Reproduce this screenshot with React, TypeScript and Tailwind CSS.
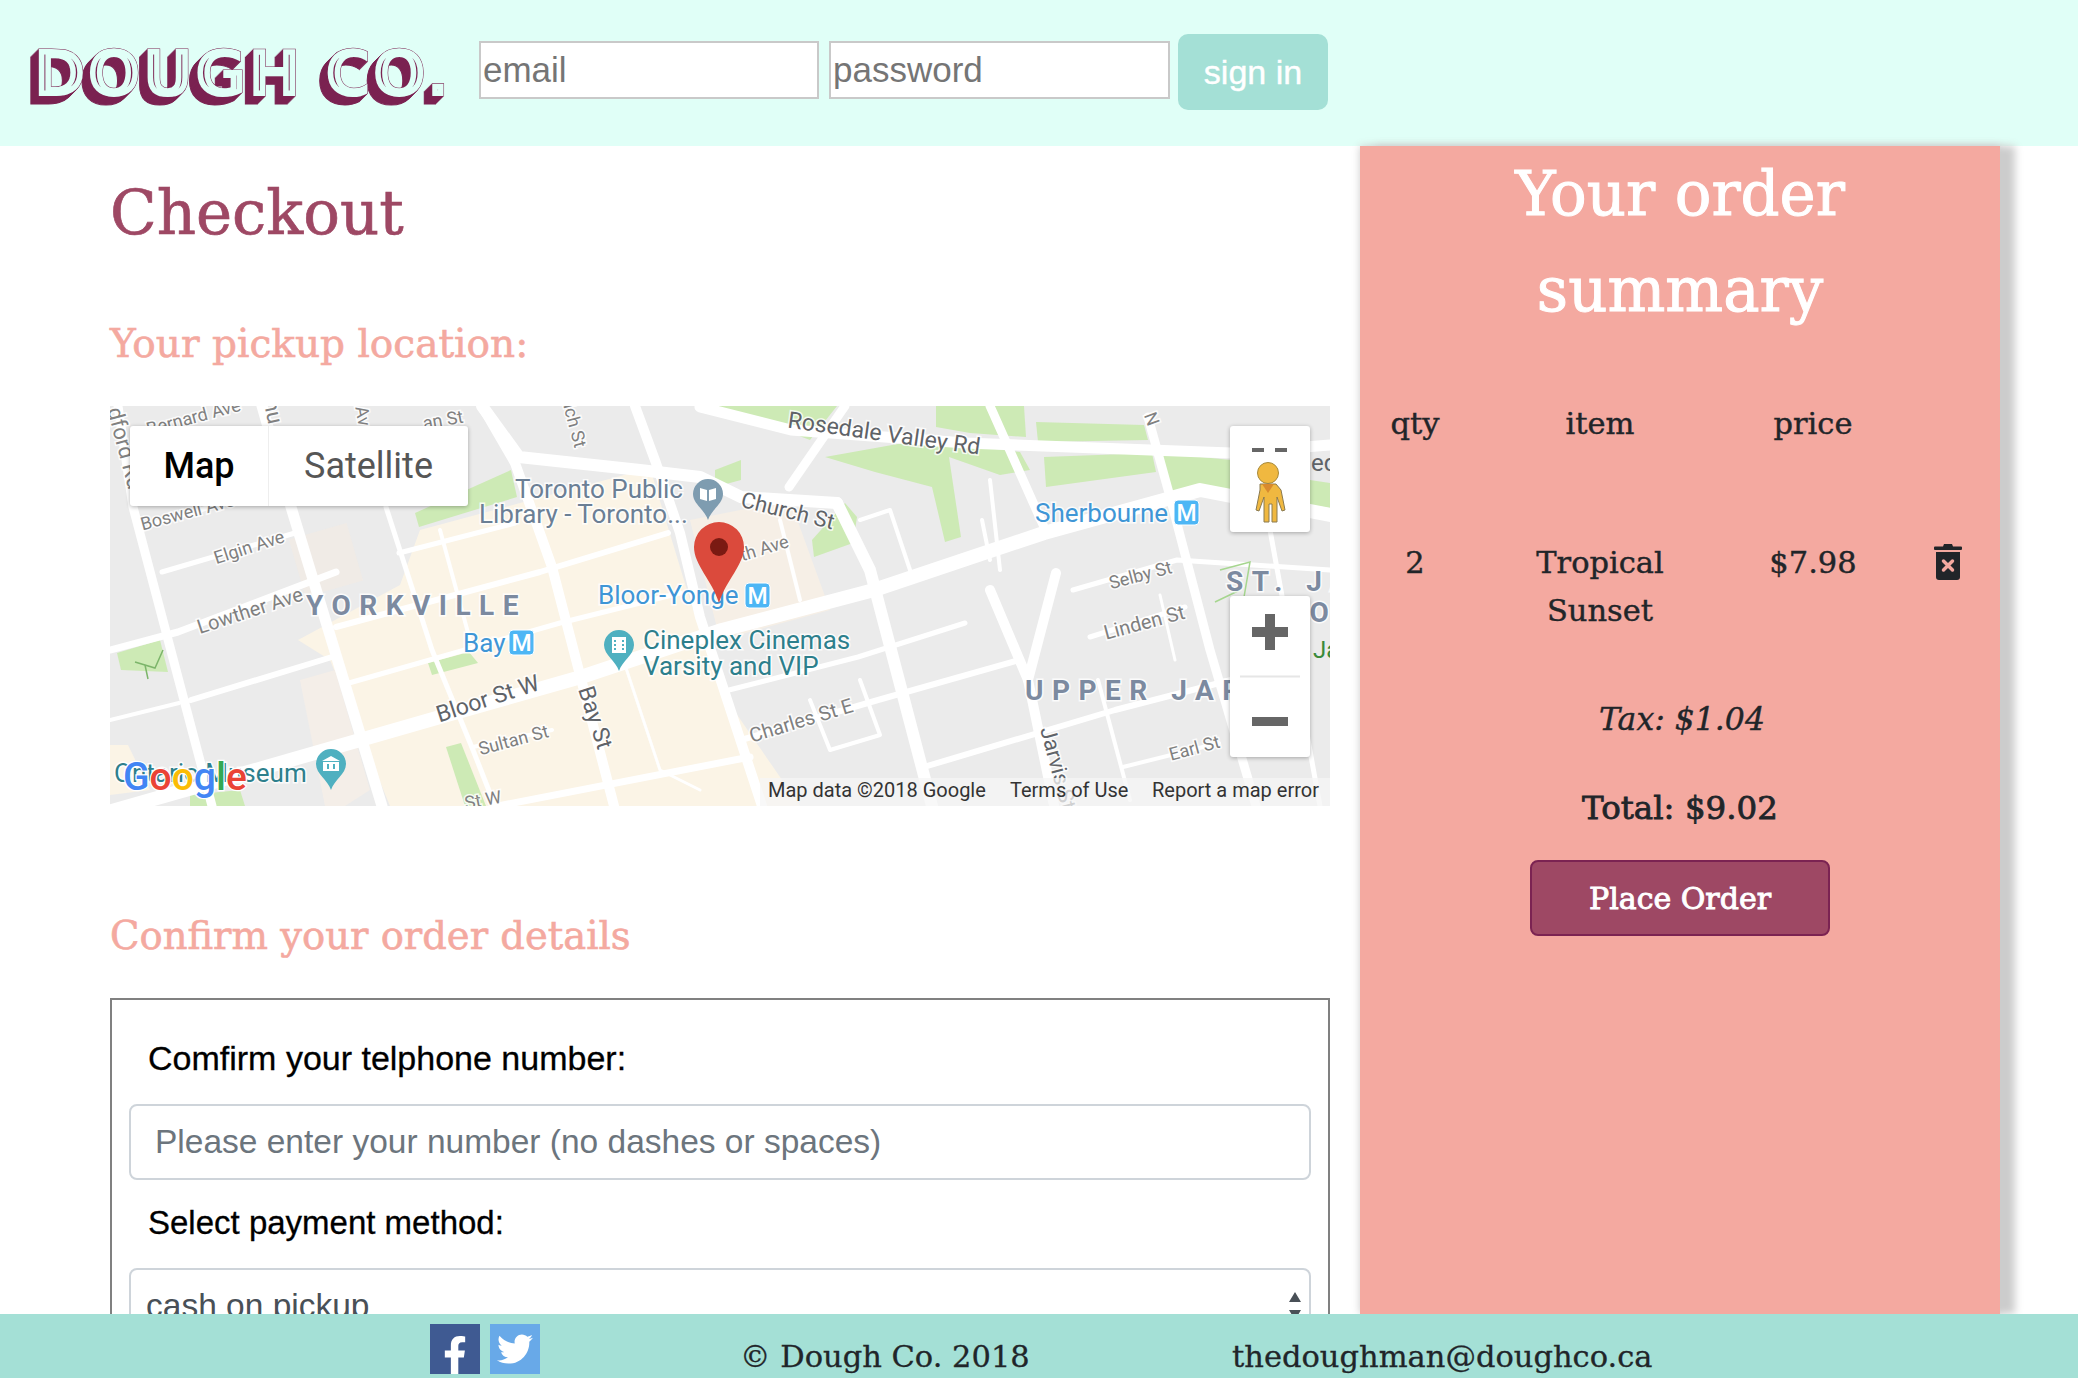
import React from "react";
import { FaFacebookF, FaTwitter } from "react-icons/fa";

const roads: [string, number][] = [
  ["118,406 133,507 212,806", 9],
  ["262,406 291,507 382,806", 11],
  ["386,507 432,650 473,750 495,806", 5],
  ["482,406 515,463 552,567 614,806", 10],
  ["635,406 656,463 680,533 700,617 762,806", 10],
  ["845,406 789,487", 9],
  ["837,503 870,570 932,806", 12],
  ["990,406 1044,527", 9],
  ["1056,573 1028,680 1056,815", 10],
  ["990,590 1028,680", 10],
  ["1148,417 1169,493 1210,650 1256,806", 9],
  ["1270,530 1290,640 1320,806", 5],
  ["108,812 266,767 440,717 581,677 722,630 874,590 1044,533 1200,490 1330,515", 14],
  ["700,407 791,430 965,443 1231,453 1330,445", 11],
  ["482,406 519,457 640,470 700,477 741,497 837,503", 12],
  ["110,650 178,632 336,572", 7],
  ["336,627 540,572 668,533", 6],
  ["162,572 295,533", 5],
  ["399,553 515,523", 5],
  ["150,525 300,480", 5],
  ["191,700 332,657", 6],
  ["349,683 560,623 680,593", 5],
  ["110,720 179,703", 4],
  ["473,747 552,730", 4],
  ["498,806 750,757", 7],
  ["741,740 878,700 1019,660", 6],
  ["729,690 858,657 965,623", 5],
  ["924,767 1115,710 1231,680", 6],
  ["1123,767 1219,743", 4],
  ["1073,590 1177,560 1330,570", 5],
  ["1090,637 1185,607", 5],
  ["990,480 1000,570", 4],
  ["982,520 990,560", 4],
  ["780,520 800,600", 4],
  ["860,520 890,510 910,570", 4],
  ["810,700 830,750 880,735 860,680", 4],
  ["440,530 470,640", 4],
  ["1160,595 1175,660", 3],
  ["1098,680 1130,800", 4],
  ["620,650 660,770 700,790", 3],
];

const parks: string[] = [
  "936,406 1024,406 1026,437 970,433 936,427",
  "708,406 837,406 810,440 770,425 720,416",
  "825,457 920,440 1020,452 1030,470 1000,475 949,457 961,537 945,542 932,487 875,472",
  "1044,457 1152,453 1156,472 1046,487",
  "1036,422 1144,425 1148,440 1038,442",
  "1160,453 1231,460 1231,490 1169,493",
  "1310,480 1330,483 1330,508 1310,505",
  "715,470 741,460 741,480 715,487",
  "812,540 845,503 857,517 853,543 814,557",
  "415,513 511,470 517,497 419,527",
  "117,653 160,640 168,672 121,670",
  "428,663 469,652 478,663 432,675",
  "446,747 461,743 486,806 465,806",
  "190,795 240,790 245,806 190,806",
];

const streetLabels: [string, number, number, number, number][] = [
  ["Bernard Ave", 195, 423, -15, 18],
  ["Boswell Ave", 189, 518, -15, 18],
  ["Elgin Ave", 251, 553, -18, 18],
  ["Lowther Ave", 252, 617, -18, 20],
  ["Sultan St", 515, 746, -15, 18],
  ["Charles St E", 803, 727, -17, 20],
  ["Selby St", 1142, 581, -15, 18],
  ["Linden St", 1146, 629, -15, 20],
  ["Earl St", 1196, 754, -15, 18],
  ["th Ave", 766, 554, -17, 18],
  ["an St", 444, 426, -10, 18],
  ["ich St", 569, 427, 75, 18],
  ["Av", 357, 417, 80, 18],
  ["nu", 266, 413, 78, 22],
  ["dford Rd", 118, 450, 75, 22],
  ["St W", 484, 806, -10, 18],
  ["N", 1146, 421, 70, 18],
];

const darkLabels: [string, number, number, number, number][] = [
  ["Rosedale Valley Rd", 883, 441, 8, 23],
  ["Church St", 786, 518, 14, 22],
  ["Bloor St W", 490, 706, -18, 23],
  ["Bay St", 588, 720, 72, 23],
  ["Jarvis St", 1051, 770, 75, 22],
];

const haloText = "[paint-order:stroke] stroke-white/80 stroke-[3px]";

function MetroBadge({ x, y }: { x: number; y: number }) {
  return (
    <g>
      <rect x={x} y={y} width="25" height="25" rx="4" fill="#4db6f5" stroke="#fff" strokeWidth="1" />
      <text x={x + 12.5} y={y + 21} textAnchor="middle" fontSize="23" fontWeight="500" fill="#fff">
        M
      </text>
    </g>
  );
}

function PoiPin({ x, y, color, children }: { x: number; y: number; color: string; children: React.ReactNode }) {
  return (
    <g transform={`translate(${x} ${y})`}>
      <path d="M0 40C-3 30 -15 24 -15 14a15 15 0 0 1 30 0C15 24 3 30 0 40Z" fill={color} />
      {children}
    </g>
  );
}

function MapCanvas() {
  return (
    <svg viewBox="110 406 1220 400" className="block w-full h-full font-['Roboto',sans-serif]">
      <rect x="110" y="406" width="1220" height="400" fill="#ebebeb" />
      <polygon
        points="298,640 400,585 420,530 650,468 690,600 720,690 800,806 390,806 330,660"
        fill="#fbf4e6"
      />
      <polygon points="110,745 128,745 150,790 110,795" fill="#fbf4e6" />
      <polygon points="690,520 790,500 830,610 720,640" fill="#f6efe6" />
      <polygon points="300,680 335,670 370,790 345,806 325,806" fill="#f4eee8" />
      <rect x="296" y="530" width="60" height="60" fill="#f4ebe2" opacity="0.6" transform="rotate(-16 326 560)" />
      {parks.map((p, i) => (
        <polygon key={i} points={p} fill="#cdeab5" />
      ))}
      {roads.map(([p, w], i) => (
        <polyline key={i} points={p} fill="none" stroke="#fff" strokeWidth={w} strokeLinejoin="round" strokeLinecap="round" />
      ))}
      <path d="M1220 570l30 -8 -6 35 12 22 -20 20 M1240 590l-25 12" fill="none" stroke="#a6d68f" strokeWidth="1.5" />
      <path d="M135 662l20 6 8 -18 M145 665l3 14" fill="none" stroke="#7cb56a" strokeWidth="1.5" />

      {streetLabels.map(([t, x, y, r, s]) => (
        <text key={t} x={x} y={y} textAnchor="middle" fontSize={s} fill="#808080" transform={`rotate(${r} ${x} ${y})`} className={haloText}>
          {t}
        </text>
      ))}
      {darkLabels.map(([t, x, y, r, s]) => (
        <text key={t} x={x} y={y} textAnchor="middle" fontSize={s} fill="#5f6368" transform={`rotate(${r} ${x} ${y})`} className={haloText}>
          {t}
        </text>
      ))}

      <text x="515" y="498" fontSize="26" fill="#6b7f95" className={haloText}>Toronto Public</text>
      <text x="479" y="523" fontSize="26" fill="#6b7f95" className={haloText}>Library - Toronto...</text>
      <text x="1035" y="522" fontSize="26" fill="#3f96d6" className={haloText}>Sherbourne</text>
      <text x="598" y="604" fontSize="26" fill="#3f96d6" className={haloText}>Bloor-Yonge</text>
      <text x="463" y="652" fontSize="26" fill="#3f96d6" className={haloText}>Bay</text>
      <text x="643" y="649" fontSize="26" fill="#2d7f8c" className={haloText}>Cineplex Cinemas</text>
      <text x="643" y="675" fontSize="26" fill="#2d7f8c" className={haloText}>Varsity and VIP</text>
      <text x="114" y="782" fontSize="26" fill="#2d7f8c" className={haloText}>Ontario Museum</text>
      <text x="306" y="615" fontSize="28" fontWeight="700" letterSpacing="8.5" fill="#7c8aa0" className={haloText}>YORKVILLE</text>
      <text x="1025" y="700" fontSize="28" fontWeight="700" letterSpacing="8.5" fill="#7c8aa0" className={haloText}>UPPER JARVIS</text>
      <text x="1226" y="591" fontSize="28" fontWeight="700" letterSpacing="8.5" fill="#7c8aa0" className={haloText}>ST. JAMES</text>
      <text x="1284" y="622" fontSize="28" fontWeight="700" letterSpacing="8.5" fill="#7c8aa0" className={haloText}>TOWN</text>
      <text x="1313" y="658" fontSize="24" fill="#3a8a3a">Ja</text>
      <text x="1311" y="471" fontSize="24" fill="#5f6368">ed</text>

      <MetroBadge x={1174} y={500} />
      <MetroBadge x={745} y={583} />
      <MetroBadge x={509} y={630} />

      <PoiPin x={708} y={480} color="#7e9cb0">
        <path d="M-8 8l7 2v11l-7 -2zM8 8l-7 2v11l7 -2z" fill="#fff" />
      </PoiPin>
      <PoiPin x={619} y={631} color="#4fb0c0">
        <path d="M-7 6h14v16h-14z" fill="#fff" />
        <path d="M-5 9h2v2h-2zM-5 13h2v2h-2zM-5 17h2v2h-2zM3 9h2v2h-2zM3 13h2v2h-2zM3 17h2v2h-2z" fill="#4fb0c0" />
      </PoiPin>
      <PoiPin x={331} y={750} color="#4fb0c0">
        <path d="M-9 11l9 -5 9 5zM-8 12h16v9h-16z" fill="#fff" />
        <path d="M-4 14h2v5h-2zM2 14h2v5h-2z" fill="#4fb0c0" />
      </PoiPin>

      <path d="M719 603C712 580 694 565 694 547a25 25 0 0 1 50 0C744 565 726 580 719 603Z" fill="#db4a3c" />
      <circle cx="719" cy="547" r="9" fill="#7a1a12" />

      <rect x="760" y="778" width="570" height="28" fill="#f5f5f5" fillOpacity="0.75" />
      <g fontSize="20" fill="#333">
        <text x="768" y="797">Map data ©2018 Google</text>
        <text x="1010" y="797">Terms of Use</text>
        <text x="1152" y="797">Report a map error</text>
      </g>
      <text x="123" y="790" fontSize="39" fontWeight="500" stroke="#fff" strokeWidth="2.5" className="[paint-order:stroke]">
        <tspan fill="#4285f4">G</tspan>
        <tspan fill="#ea4335">o</tspan>
        <tspan fill="#fbbc05">o</tspan>
        <tspan fill="#4285f4">g</tspan>
        <tspan fill="#34a853">l</tspan>
        <tspan fill="#ea4335">e</tspan>
      </text>
    </svg>
  );
}

function Logo() {
  const depth = [8, 7, 6, 5, 4, 3, 2, 1];
  return (
    <svg viewBox="0 0 479 146" className="w-[479px] h-[146px] shrink-0">
      <defs>
        <text id="logo-text" x="33" y="96" fontSize="64" fontWeight="700" letterSpacing="0.6" fontFamily="DejaVu Sans">
          DOUGH CO.
        </text>
        <clipPath id="logo-clip">
          <use href="#logo-text" />
        </clipPath>
      </defs>
      {depth.map((d) => (
        <use key={d} href="#logo-text" x={-d} y={d} fill="#7b2352" stroke="#7b2352" strokeWidth="1" />
      ))}
      <use href="#logo-text" fill="#e0fff7" stroke="#7b2352" strokeWidth="1" />
      <g clipPath="url(#logo-clip)">
        <use href="#logo-text" fill="none" stroke="#7b2352" strokeWidth="13" />
        <use href="#logo-text" fill="none" stroke="#e0fff7" strokeWidth="11" />
      </g>
    </svg>
  );
}

function TrashIcon() {
  return (
    <svg viewBox="0 0 28 36" className="w-7 h-9">
      <path d="M9 2.5 10 0h8l1 2.5h8a1 1 0 0 1 1 1V5a1 1 0 0 1-1 1H1a1 1 0 0 1-1-1V3.500a1 1 0 0 1 1-1Z" fill="#212529" />
      <path d="M2 8h24v25a3 3 0 0 1-3 3H5a3 3 0 0 1-3-3Z" fill="#212529" />
      <path d="m9.500 17 9 9m0-9-9 9" stroke="#f4a9a0" strokeWidth="3.500" strokeLinecap="round" />
    </svg>
  );
}

export default function App() {
  return (
    <div className="h-screen flex flex-col overflow-hidden bg-white font-['Liberation_Sans',sans-serif]">
      <header className="h-[146px] shrink-0 flex items-start bg-[#e0fff7]">
        <Logo />
        <input
          placeholder="email"
          className="mt-[41px] w-[340px] h-[58px] border-2 border-[#c9c9c9] bg-white px-[2px] text-[35px] placeholder:text-[#757575]"
        />
        <input
          placeholder="password"
          className="ml-[10px] mt-[41px] w-[341px] h-[58px] border-2 border-[#c9c9c9] bg-white px-[2px] text-[35px] placeholder:text-[#757575]"
        />
        <button className="ml-2 mt-[34px] w-[150px] h-[76px] rounded-[10px] bg-[#a4e0d6] text-white text-[34px] [-webkit-text-stroke:0.4px]">
          sign in
        </button>
      </header>

      <div className="flex-1 min-h-0 flex">
        <main className="w-[1360px] shrink-0 pl-[110px] pr-[30px] font-['DejaVu_Serif',serif]">
          <h1 className="mt-[22px] text-[61px] leading-[90px] text-[#9e4864] [-webkit-text-stroke:0.7px]">Checkout</h1>
          <h2 className="mt-[59px] text-[39px] leading-[54px] text-[#f4a9a0] [-webkit-text-stroke:0.6px]">Your pickup location:</h2>
          <div className="relative mt-[35px] h-[400px] overflow-hidden">
            <MapCanvas />
            <div className="absolute left-[20px] top-[20px] w-[338px] h-[80px] flex items-center bg-white rounded-[3px] shadow-[0_1px_4px_rgba(0,0,0,0.3)] font-['Roboto',sans-serif] text-[36px]">
              <div className="w-[139px] h-full flex items-center justify-center font-medium text-black border-r border-[#eee]">Map</div>
              <div className="flex-1 h-full flex items-center justify-center text-[#565656]">Satellite</div>
            </div>
            <div className="absolute left-[1120px] top-[20px] w-[80px] h-[106px] bg-white rounded-[3px] shadow-[0_1px_4px_rgba(0,0,0,0.3)]">
              <svg viewBox="0 0 80 106" className="w-full h-full">
                <path d="M22 22h12v4H22zM45 22h12v4H45z" fill="#666" />
                <circle cx="38" cy="47" r="10.500" fill="#f0b840" stroke="#a88a3a" strokeWidth="1" />
                <path d="M30 58h16l5 6 4 20-3 1-5-14v25h-5V78h-3v18h-5V71l-5 14-3-1 4-20Z" fill="#f0b840" stroke="#8a7a50" strokeWidth="1" />
                <path d="M32 58h12l-6 9Z" fill="#d98a2e" />
              </svg>
            </div>
            <div className="absolute left-[1120px] top-[190px] w-[80px] h-[161px] bg-white rounded-[3px] shadow-[0_1px_4px_rgba(0,0,0,0.3)]">
              <svg viewBox="0 0 80 161" className="w-full h-full">
                <path d="M35 18h10v13h13v10H45v13H35V41H22V31h13Z" fill="#666" />
                <path d="M10 80.500h60" stroke="#e6e6e6" strokeWidth="2" />
                <path d="M22 121h36v9H22Z" fill="#666" />
              </svg>
            </div>
          </div>

          <h2 className="mt-[103px] text-[38.500px] leading-[54px] text-[#f4a9a0] [-webkit-text-stroke:0.6px]">Confirm your order details</h2>
          <section className="mt-[35px] border-2 border-[#808080] px-[17px] pt-[34px] font-['Liberation_Sans',sans-serif]">
            <label className="block pl-[19px] text-[34px] leading-[48px] text-black [-webkit-text-stroke:0.3px]">Comfirm your telphone number:</label>
            <input
              placeholder="Please enter your number (no dashes or spaces)"
              className="mt-[22px] block w-full h-[76px] rounded-lg border-2 border-[#ced4da] bg-white px-[24px] text-[33.500px] placeholder:text-[#6c757d]"
            />
            <label className="mt-[19px] block pl-[19px] text-[33px] leading-[48px] text-black [-webkit-text-stroke:0.3px]">Select payment method:</label>
            <div className="relative mt-[21px]">
              <select className="block w-full h-[76px] appearance-none rounded-lg border-2 border-[#ced4da] bg-white px-[15px] text-[33.500px] text-[#495057]">
                <option>cash on pickup</option>
              </select>
              <svg viewBox="0 0 16 32" className="absolute right-[8px] top-[22px] w-4 h-8">
                <path d="M8 2l6 10H2ZM2 20h12l-6 10Z" fill="#495057" />
              </svg>
            </div>
          </section>
        </main>

        <aside className="relative z-10 w-[640px] shrink-0 bg-[#f4a9a0] shadow-[15px_0_8px_#ccc,0_0_8px_#ccc] text-[#212529] font-['DejaVu_Serif',serif]">
          <h2 className="text-center text-[61px] leading-[96px] text-white [-webkit-text-stroke:1px]">
            Your order
            <br />
            summary
          </h2>
          <div className="mt-[62px] grid grid-cols-[110px_260px_166px_104px] text-center text-[30.500px] leading-[48px] [-webkit-text-stroke:0.4px]">
            <div>qty</div>
            <div>item</div>
            <div>price</div>
            <div />
            <div className="mt-[91px]">2</div>
            <div className="mt-[91px]">
              Tropical
              <br />
              Sunset
            </div>
            <div className="mt-[91px]">$7.98</div>
            <div className="mt-[96px] flex justify-center">
              <TrashIcon />
            </div>
          </div>
          <p className="mt-[60px] pl-[4px] text-center text-[31.500px] leading-[48px] italic [-webkit-text-stroke:0.4px]">Tax: $1.04</p>
          <p className="mt-[41px] text-center text-[32.500px] leading-[48px] [-webkit-text-stroke:0.8px]">Total: $9.02</p>
          <button className="block mx-auto mt-[28px] w-[300px] h-[76px] rounded-lg border-2 border-[#7b2352] bg-[#9e4864] text-white text-[30px] [-webkit-text-stroke:0.9px]">
            Place Order
          </button>
        </aside>
      </div>

      <footer className="relative z-20 h-[64px] shrink-0 flex items-start bg-[#a4e0d6] font-['DejaVu_Serif',serif] text-[30.500px] text-[#212529] [-webkit-text-stroke:0.3px]">
        <div className="ml-[430px] mt-[10px] w-[50px] h-[50px] flex items-end justify-center bg-[#3f5a92] text-white">
          <FaFacebookF size={38} />
        </div>
        <div className="ml-[10px] mt-[10px] w-[50px] h-[50px] flex items-center justify-center bg-[#68a9e8] text-white">
          <FaTwitter size={36} />
        </div>
        <span className="ml-[200px] mt-[19px] leading-[48px]">© Dough Co. 2018</span>
        <span className="absolute left-[1232px] top-[19px] leading-[48px]">thedoughman@doughco.ca</span>
      </footer>
    </div>
  );
}
